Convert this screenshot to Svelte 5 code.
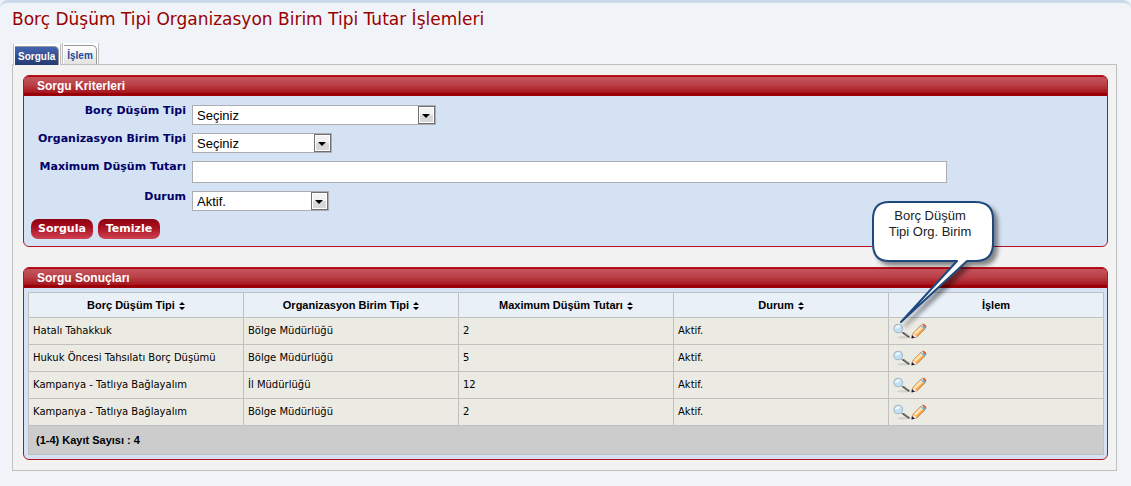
<script>
  const typeOptions = ['Seçiniz', 'Borç Düşümü', 'Kampanya'];
  const unitOptions = ['Seçiniz', 'Bölge Müdürlüğü', 'İl Müdürlüğü'];
  const statusOptions = ['Aktif.', 'Pasif.'];

  const columns = [
    { label: 'Borç Düşüm Tipi', sortable: true },
    { label: 'Organizasyon Birim Tipi', sortable: true },
    { label: 'Maximum Düşüm Tutarı', sortable: true },
    { label: 'Durum', sortable: true },
    { label: 'İşlem', sortable: false },
  ];

  const rows = [
    { type: 'Hatalı Tahakkuk', unit: 'Bölge Müdürlüğü', max: 2, status: 'Aktif.' },
    { type: 'Hukuk Öncesi Tahsılatı Borç Düşümü', unit: 'Bölge Müdürlüğü', max: 5, status: 'Aktif.' },
    { type: 'Kampanya - Tatlıya Bağlayalım', unit: 'İl Müdürlüğü', max: 12, status: 'Aktif.' },
    { type: 'Kampanya - Tatlıya Bağlayalım', unit: 'Bölge Müdürlüğü', max: 2, status: 'Aktif.' },
  ];

  let type = $state('Seçiniz');
  let unit = $state('Seçiniz');
  let max = $state('');
  let status = $state('Aktif.');
  let activeTab = $state('query');

  function reset() {
    type = 'Seçiniz';
    unit = 'Seçiniz';
    max = '';
    status = 'Aktif.';
  }
</script>

<main class="page">
  <h1>Borç Düşüm Tipi Organizasyon Birim Tipi Tutar İşlemleri</h1>

  <div class="tabs" role="tablist">
    <div class="tab-frame" class:active={activeTab === 'query'}>
      <button class="tab" role="tab" aria-selected={activeTab === 'query'} onclick={() => (activeTab = 'query')}>Sorgula</button>
    </div>
    <div class="tab-frame" class:active={activeTab === 'action'}>
      <button class="tab" role="tab" aria-selected={activeTab === 'action'} onclick={() => (activeTab = 'action')}>İşlem</button>
    </div>
  </div>

  <div class="content">
    <section class="panel">
      <h2>Sorgu Kriterleri</h2>
      <form class="criteria" onsubmit={(e) => e.preventDefault()}>
        <div class="fields">
          <label for="type">Borç Düşüm Tipi</label>
          <span class="select wide">
            <select id="type" bind:value={type}>
              {#each typeOptions as option}<option>{option}</option>{/each}
            </select>
          </span>

          <label for="unit">Organizasyon Birim Tipi</label>
          <span class="select">
            <select id="unit" bind:value={unit}>
              {#each unitOptions as option}<option>{option}</option>{/each}
            </select>
          </span>

          <label for="max">Maximum Düşüm Tutarı</label>
          <input id="max" type="text" bind:value={max} />

          <label for="status">Durum</label>
          <span class="select narrow">
            <select id="status" bind:value={status}>
              {#each statusOptions as option}<option>{option}</option>{/each}
            </select>
          </span>
        </div>
        <div class="buttons">
          <button class="action" type="submit">Sorgula</button>
          <button class="action" type="button" onclick={reset}>Temizle</button>
        </div>
      </form>
    </section>

    <section class="panel">
      <h2>Sorgu Sonuçları</h2>
      <div class="results">
        <table>
          <thead>
            <tr>
              {#each columns as col}
                <th scope="col">
                  {col.label}
                  {#if col.sortable}
                    <svg class="sort" width="6" height="8" viewBox="0 0 6 8" aria-hidden="true">
                      <path d="M3 0L6 3H0zM0 5h6L3 8z" />
                    </svg>
                  {/if}
                </th>
              {/each}
            </tr>
          </thead>
          <tbody>
            {#each rows as row, i}
              <tr>
                <td>{row.type}</td>
                <td>{row.unit}</td>
                <td>{row.max}</td>
                <td>{row.status}</td>
                <td>
                  <div class="row-actions">
                    <button class="icon" aria-label="Görüntüle">
                      <svg width="18" height="16" viewBox="0 0 18 16">
                        <ellipse cx="10" cy="14.300" rx="6" ry="1.200" fill="#000" opacity=".1" />
                        <path d="M8.500 8.800l2 1.500" stroke="#a8a8a8" stroke-width="1.500" />
                        <path d="M10.500 10l5.200 3.800" stroke="#4c4c4c" stroke-width="2" stroke-linecap="round" />
                        <path d="M10.600 9.600l5 3.600" stroke="#aaa" stroke-width=".6" />
                        <circle cx="5.200" cy="5.500" r="4.300" fill="#c0e2f7" stroke="#a9b9c4" stroke-width="1.100" />
                        <path d="M2 5.500a3.300 3.300 0 0 1 5.400-2.400C6.500 5.200 4.500 5.900 2 5.500z" fill="#eff9ff" />
                      </svg>
                    </button>
                    <button class="icon" aria-label="Düzenle">
                      <svg width="16" height="16" viewBox="0 0 16 16">
                        <path d="M1 14.800l1.200-4.600L10.300 2l3.900 3.700-8.100 8z" fill="#fba94b" stroke="#b8743a" stroke-width=".8" />
                        <path d="M2.800 10.100l7.700-7.500 1.900 1.800-7.700 7.600z" fill="#ffe3b3" />
                        <path d="M1 14.800l1.300-4.400 3.600 3.200z" fill="#fbe9cf" />
                        <path d="M.4 15.400l.5-3.400 3 2.800z" fill="#1b1844" />
                        <path d="M9.500 2.800l1.500-1.400 3.900 3.700-1.500 1.500z" fill="#5fb4e2" />
                        <path d="M10.200 2.100l.9-.8 1.500 1.300-.9.900z" fill="#d8f0fa" />
                        <path d="M11.200 1.200c1.100-1.400 4.900 1.800 4 3.300l-.6.600z" fill="#e0552c" />
                      </svg>
                    </button>
                    {#if i === 0}
                      <div class="callout" role="note">
                        <svg width="134" height="130" viewBox="0 0 134 130" aria-hidden="true">
                          <path class="bubble" d="M19 3H105Q123 3 123 20V45Q123 62 105 62H97L31 123 87 62H19Q3 62 3 45V20Q3 3 19 3z" />
                        </svg>
                        <p>Borç Düşüm<br />Tipi Org. Birim</p>
                      </div>
                    {/if}
                  </div>
                </td>
              </tr>
            {/each}
          </tbody>
          <tfoot>
            <tr>
              <td colspan="5">(1-4) Kayıt Sayısı : 4</td>
            </tr>
          </tfoot>
        </table>
      </div>
    </section>
  </div>
</main>

<style>
  :global(body) {
    margin: 0;
    background: #f0f4f9;
  }

  .page {
    padding: 6px 14px 15px 12px;
    border-top: 3px solid #cbd9ea;
    border-radius: 8px 8px 0 0;
    font-family: Verdana, "DejaVu Sans", sans-serif;
  }

  h1 {
    margin: 0;
    color: #900;
    font-size: 17px;
    font-weight: normal;
    line-height: 20px;
  }

  /* Tabs */
  .tabs {
    display: flex;
    align-items: flex-end;
    gap: 1px;
    height: 21px;
    padding: 14px 0 0 1px;
  }
  .tab-frame {
    padding: 2px 1px 0;
    border: solid #c0c0c0;
    border-width: 0 1px;
    background: #fff;
  }
  .tab {
    display: block;
    box-sizing: border-box;
    height: 19px;
    padding: 0 3px;
    border: solid #999;
    border-width: 1px 1px 0 0;
    border-radius: 0 5px 0 0;
    background: linear-gradient(#fff, #e2e2e2);
    color: #1e4a9a;
    font: bold 10px/17px "Liberation Sans", Arial, sans-serif;
  }
  /* The open tab covers the top border of the content box */
  .tab-frame.active {
    z-index: 1;
    margin-bottom: -1px;
  }
  .active .tab {
    background: linear-gradient(#4465b0, #24396f);
    color: #fff;
  }

  .content {
    display: flex;
    flex-direction: column;
    gap: 20px;
    padding: 10px 8px 10px 10px;
    border: 1px solid #c0c0c0;
    background: #f2f2f2;
  }

  /* Panels */
  .panel {
    border: 1px solid #b5121f;
    border-radius: 6px;
    background: #d5e2f3;
  }
  h2 {
    box-sizing: border-box;
    height: 20px;
    margin: 0;
    padding: 0 13px;
    border-top: 1px solid #b00010;
    border-bottom: 3px solid #990007;
    border-radius: 5px 5px 0 0;
    background: linear-gradient(#c4555c, #bb4048 50%, #a6141c);
    color: #fff;
    font: bold 12px/18px "Liberation Sans", Arial, sans-serif;
  }

  /* Criteria form */
  .criteria {
    padding: 9px 7px 7px;
  }
  .fields {
    display: grid;
    grid-template-columns: 155px 1fr;
    gap: 8px 6px;
    align-items: start;
  }
  label {
    color: #006;
    font-size: 11px;
    font-weight: bold;
    line-height: 12px;
    text-align: right;
    white-space: nowrap;
  }
  .select {
    position: relative;
    width: 140px;
    height: 20px;
  }
  .select.wide {
    width: 244px;
  }
  .select.narrow {
    width: 137px;
  }
  select,
  input {
    display: block;
    box-sizing: border-box;
    width: 100%;
    height: 20px;
    padding: 0 4px;
    border: 1px solid #abadb3;
    border-radius: 0;
    background: #fff;
    color: #000;
    font: 13px "Liberation Sans", Arial, sans-serif;
    appearance: none;
  }
  input {
    max-width: 755px;
    height: 22px;
  }
  .select::before {
    content: '';
    position: absolute;
    top: 1px;
    right: 1px;
    box-sizing: border-box;
    width: 17px;
    height: 18px;
    border: 1px solid #707070;
    background: linear-gradient(#f2f2f2 50%, #d8d8d8 50%);
    box-shadow: inset 0 0 0 1px #fff;
    pointer-events: none;
  }
  .select::after {
    content: '';
    position: absolute;
    top: 9px;
    right: 6px;
    border: solid transparent;
    border-width: 4px 4px 0;
    border-top-color: #000;
    pointer-events: none;
  }

  .buttons {
    display: flex;
    gap: 5px;
    margin-top: 8px;
  }
  .action {
    min-width: 62px;
    height: 20px;
    padding: 0 6px;
    border: 0;
    border-radius: 7px;
    background: linear-gradient(#8e0010, #a80f20 40%, #cf4252);
    color: #fff;
    font: bold 11px/20px Verdana, "DejaVu Sans", sans-serif;
  }

  /* Results */
  .results {
    padding: 4px 3px 4px 4px;
  }
  table {
    width: 100%;
    border-collapse: collapse;
    table-layout: fixed;
    font-size: 10px;
  }
  th,
  td {
    height: 26px;
    padding: 0 4px;
    border: 1px solid #c0c0c0;
  }
  th {
    height: 24px;
    background: #e9f0f8;
    font: bold 11px "Liberation Sans", Arial, sans-serif;
  }
  td {
    background: #ebebe4;
    line-height: 12px;
  }
  tfoot td {
    height: 28px;
    padding: 0 7px;
    background: #ccc;
    font: bold 11px "Liberation Sans", Arial, sans-serif;
  }
  .sort {
    margin-left: 1px;
    vertical-align: -1px;
  }

  .row-actions {
    position: relative;
    display: flex;
  }
  .icon {
    padding: 0;
    border: 0;
    background: none;
  }
  .icon svg {
    display: block;
  }

  /* Speech bubble over the first row's view icon */
  .callout {
    position: absolute;
    left: -23px;
    bottom: 10px;
    width: 134px;
    height: 130px;
    pointer-events: none;
  }
  .callout svg {
    display: block;
    filter: drop-shadow(4px 4px 2px rgba(0, 0, 0, 0.45));
  }
  .bubble {
    fill: #fff;
    stroke: #1f497d;
    stroke-width: 2;
    stroke-linejoin: round;
  }
  .callout p {
    position: absolute;
    top: 9px;
    left: 0;
    width: 120px;
    margin: 0;
    color: #222;
    font: 13px/16px "Liberation Sans", Arial, sans-serif;
    text-align: center;
  }
</style>
